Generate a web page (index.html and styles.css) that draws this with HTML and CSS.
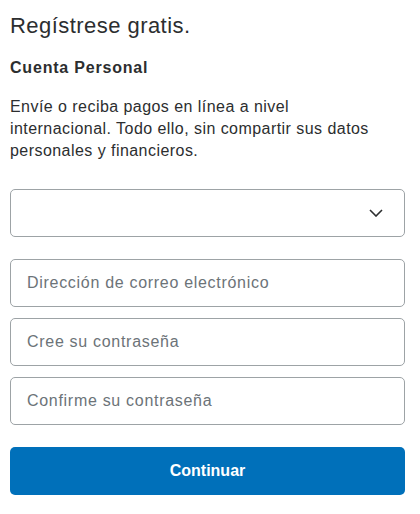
FILE: index.html
```html
<!DOCTYPE html>
<html lang="es">
<head>
<meta charset="utf-8">
<title>Regístrese gratis</title>
<link rel="stylesheet" href="styles.css">
</head>
<body>
<main class="signup">
  <h1 class="title">Regístrese gratis.</h1>
  <h2 class="subtitle">Cuenta Personal</h2>
  <p class="intro">Envíe o reciba pagos en línea a nivel internacional. Todo ello, sin compartir sus datos personales y financieros.</p>
  <form class="form">
    <div class="select">
      <span class="select-value"></span>
      <svg class="chevron" width="14" height="8" viewBox="0 0 14 8"><path d="M1 1l6 6 6-6" fill="none" stroke="#2c2e2f" stroke-width="1.6"/></svg>
    </div>
    <div class="fields">
      <div class="field">Dirección de correo electrónico</div>
      <div class="field">Cree su contraseña</div>
      <div class="field">Confirme su contraseña</div>
    </div>
    <button type="button" class="btn">Continuar</button>
  </form>
</main>
</body>
</html>
```
FILE: styles.css
```css
* { box-sizing: border-box; }
html, body { margin: 0; padding: 0; background: #fff; }
body { font-family: "Liberation Sans", Arial, sans-serif; color: #2c2e2f; }
.signup { padding: 12px 15px 0 10px; }
.title { margin: 0; font-size: 22px; font-weight: 400; line-height: 28px; color: #2c2e2f; letter-spacing: 0.45px; }
.subtitle { margin: 18px 0 0; font-size: 16px; font-weight: 700; line-height: 20px; letter-spacing: 0.8px; }
.intro { margin: 18px 0 0; max-width: 380px; font-size: 16px; line-height: 22px; letter-spacing: 0.45px; }
.form { margin-top: 27px; display: flex; flex-direction: column; }
.select, .field {
  height: 48px; border: 1px solid #9da3a6; border-radius: 5px;
  display: flex; align-items: center; padding: 0 16px;
  font-size: 16px; color: #6c7378; letter-spacing: 0.7px;
}
.select { justify-content: space-between; padding-right: 21px; }
.fields { margin-top: 22px; display: flex; flex-direction: column; gap: 11px; }
.btn {
  margin-top: 22px; height: 48px; border: 0; border-radius: 5px;
  background: #0070ba; color: #fff; font-family: inherit;
  font-size: 16px; font-weight: 700; cursor: pointer;
}
```
